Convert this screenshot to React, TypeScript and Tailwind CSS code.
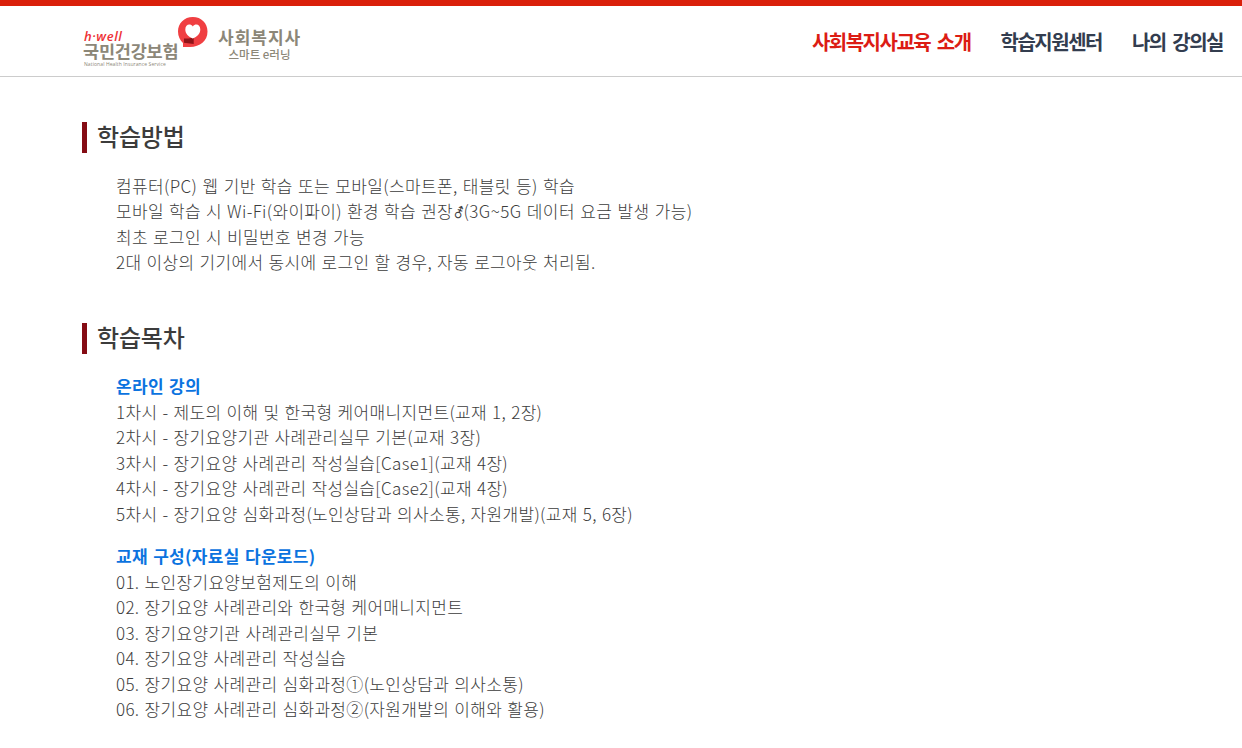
import React from 'react';

const menus = [
  { label: '사회복지사교육 소개', className: 'text-[#dc1c14]' },
  { label: '학습지원센터', className: 'text-[#333d4f]' },
  { label: '나의 강의실', className: 'text-[#333d4f]' },
];

const methods = [
  <span className="tracking-[0.38px]">컴퓨터(PC) 웹 기반 학습 또는 모바일(스마트폰, 태블릿 등) 학습</span>,
  <>
    모바일 학습 시 Wi-Fi(와이파이) 환경 학습 권장
    <span className="font-['DejaVu_Sans',sans-serif] text-[14px] leading-none tracking-[-1.5px]">⚦</span>
    <span className="tracking-[0.42px]">(3G~5G 데이터 요금 발생 가능)</span>
  </>,
  '최초 로그인 시 비밀번호 변경 가능',
  '2대 이상의 기기에서 동시에 로그인 할 경우, 자동 로그아웃 처리됨.',
];

const lectures = [
  '1차시 - 제도의 이해 및 한국형 케어매니지먼트(교재 1, 2장)',
  '2차시 - 장기요양기관 사례관리실무 기본(교재 3장)',
  '3차시 - 장기요양 사례관리 작성실습[Case1](교재 4장)',
  '4차시 - 장기요양 사례관리 작성실습[Case2](교재 4장)',
  '5차시 - 장기요양 심화과정(노인상담과 의사소통, 자원개발)(교재 5, 6장)',
];

const books = [
  '01. 노인장기요양보험제도의 이해',
  '02. 장기요양 사례관리와 한국형 케어매니지먼트',
  '03. 장기요양기관 사례관리실무 기본',
  '04. 장기요양 사례관리 작성실습',
  '05. 장기요양 사례관리 심화과정①(노인상담과 의사소통)',
  '06. 장기요양 사례관리 심화과정②(자원개발의 이해와 활용)',
];

const Logo = () => (
  <div className="flex h-[70px] items-start text-[#8c8778]">
    <div className="w-[94px] pt-[23px]">
      <p className="pl-px font-['Open_Sans',sans-serif] text-[13px] leading-[14px] font-semibold italic tracking-[0.6px] text-[#ee3035]">h·well</p>
      <p className="-mt-px whitespace-nowrap text-[17.5px] leading-[17px] font-bold tracking-[-0.2px]">국민건강보험</p>
      <p className="mt-[2px] whitespace-nowrap pl-px font-['Open_Sans',sans-serif] text-[5px] leading-[6px] tracking-[0.1px]">
        National Health Insurance Service
      </p>
    </div>
    <svg width="30" height="31" viewBox="0 0 30 31" className="mt-[11px] ml-px">
      <path
        d="M14.8 0C23.5 0 29.5 6.2 29.5 14.5C29.5 24 22 29.8 12 30H5V26C2 23 0 19.5 0 14.5C0 6.2 6.2 0 14.8 0Z"
        fill="#f03f42"
      />
      <path d="M6 21.5C9 21.5 12 21.5 15.7 20.5V27L6 25.8Z" fill="#8f1318" />
      <path
        d="M14.8 21.5C10.5 20 7.3 16.5 7.3 12.5C7.3 7 12.5 6.2 14.8 9.5C17.1 6.2 22.3 7 22.3 12.5C22.3 16.5 19 20 14.8 21.5Z"
        fill="#fff"
      />
    </svg>
    <div className="ml-[10px] w-[83px] pt-[21px] text-center">
      <p className="whitespace-nowrap text-[17px] leading-[19px] font-bold tracking-[1px]">사회복지사</p>
      <p className="whitespace-nowrap text-[11.5px] leading-[16px] font-medium">스마트 e러닝</p>
    </div>
  </div>
);

const SectionTitle = ({ children }: { children: React.ReactNode }) => (
  <h2 className="border-l-[5px] border-[#850c14] pl-[10px] pb-[2.5px] text-[24px] leading-[28px] font-medium tracking-[-0.2px]">
    {children}
  </h2>
);

const Lines = ({ items }: { items: React.ReactNode[] }) => (
  <ul>
    {items.map((item, index) => (
      <li key={index} className="whitespace-nowrap">{item}</li>
    ))}
  </ul>
);

export default function App() {
  return (
    <div className="h-[748px] overflow-hidden bg-white font-['Noto_Sans_CJK_KR',sans-serif] text-[#3c3c3c]">
      <header className="flex h-[77px] justify-between border-t-[6px] border-b border-t-[#da200b] border-b-[#ccc] pr-[19px] pl-[83px]">
        <Logo />
        <nav className="flex gap-[30px] pt-[21px] text-[20px] leading-[30px] font-bold tracking-[-1.5px] [word-spacing:3.5px]">
          {menus.map((menu) => (
            <a key={menu.label} href="#" className={menu.className}>{menu.label}</a>
          ))}
        </nav>
      </header>

      <main className="pt-[45px] pl-[82px] text-[17px] leading-[25.5px] font-light tracking-[0.33px] [word-spacing:1px]">
        <section>
          <SectionTitle>학습방법</SectionTitle>
          <div className="mt-5 pl-[34px]">
            <Lines items={methods} />
          </div>
        </section>

        <section className="mt-[48.5px]">
          <SectionTitle>학습목차</SectionTitle>
          <div className="mt-[19.5px] pl-[34px]">
            <h3 className="font-bold text-[#0b73df]">온라인 강의</h3>
            <Lines items={lectures} />
            <h3 className="mt-[17px] font-bold text-[#0b73df]">교재 구성(자료실 다운로드)</h3>
            <Lines items={books} />
          </div>
        </section>
      </main>
    </div>
  );
}
